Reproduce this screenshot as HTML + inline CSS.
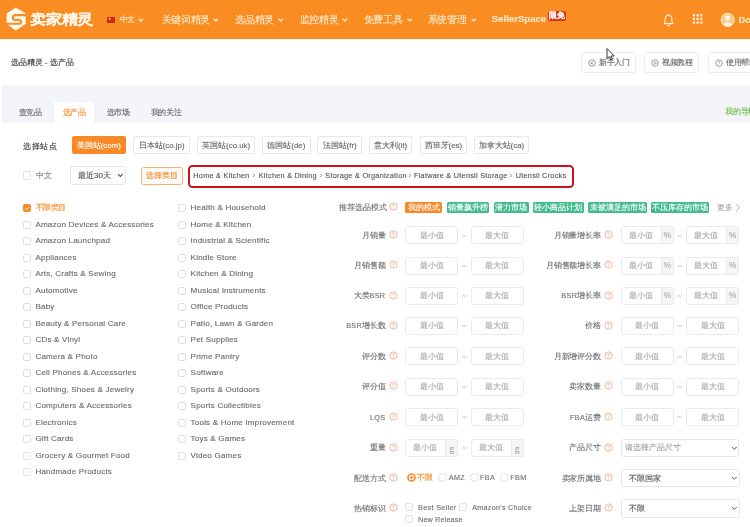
<!DOCTYPE html>
<html><head><meta charset="utf-8"><title>卖家精灵 - 选产品</title>
<style>
html,body{margin:0;padding:0;width:750px;height:527px;overflow:hidden;background:#fff;font-family:"Liberation Sans",sans-serif;}
#root{position:relative;width:750px;height:527px;overflow:hidden;will-change:transform;-webkit-text-stroke-width:0.12px;}
</style></head><body><div id="root">
<div style="position:absolute;left:0px;top:0px;width:750px;height:38px;box-sizing:border-box;background:#FA8D22"></div>
<div style="position:absolute;left:0px;top:38px;width:750px;height:1px;box-sizing:border-box;background:#E3923F"></div>
<div style="position:absolute;left:0px;top:39px;width:750px;height:1px;box-sizing:border-box;background:#FFF1D6"></div>
<div style="position:absolute;left:0px;top:40px;width:750px;height:1px;box-sizing:border-box;background:#FFFAF0"></div>
<svg style="position:absolute;left:0;top:0" width="100" height="38" viewBox="0 0 100 38">
<polygon points="15.9,7.6 25.7,13.6 25.7,24.1 15.9,30.4 6.6,24.1 6.6,13.6" fill="#FFF8EC"/>
<path d="M26,15.1 H15.3 A2.45,2.45 0 0 0 15.3,20 H19.3 A1.85,1.85 0 0 1 19.3,23.7 H6" fill="none" stroke="#FA8D22" stroke-width="2.1"/>
</svg>
<div style="position:absolute;left:29.8px;top:10.20px;line-height:20.80px;font-size:16px;color:#FFF8EC;white-space:nowrap;font-weight:700;letter-spacing:-0.1px;-webkit-text-stroke:0.12px #FFF8EC;transform:scaleY(0.86);transform-origin:50% 50%">卖家精灵</div>
<div style="position:absolute;left:107.2px;top:16.8px;width:8.0px;height:6.0px;box-sizing:border-box;background:#D12A1C"></div>
<svg style="position:absolute;left:107.5px;top:17px" width="4" height="4" viewBox="0 0 4 4"><polygon points="1.6,0.4 2.1,1.4 3.1,1.5 2.3,2.2 2.6,3.2 1.6,2.6 0.7,3.2 1,2.2 0.2,1.5 1.2,1.4" fill="#F7D23A"/></svg>
<div style="position:absolute;left:119.6px;top:15.00px;line-height:10.40px;font-size:8px;color:#FFEACD;white-space:nowrap;letter-spacing:-0.8px">中文</div>
<svg style="position:absolute;left:137.6px;top:18.2px" width="5.6" height="4" viewBox="0 0 5.6 4"><path d="M0.6,0.7 L2.8,3 L5.0,0.7" fill="none" stroke="#FFEACD" stroke-width="1.35"/></svg>
<div style="position:absolute;left:161.7px;top:13.10px;line-height:13.00px;font-size:10px;color:#FFEACD;white-space:nowrap;letter-spacing:-0.3px">关键词精灵</div>
<svg style="position:absolute;left:213px;top:18px" width="5.6" height="4" viewBox="0 0 5.6 4"><path d="M0.6,0.7 L2.8,3 L5.0,0.7" fill="none" stroke="#FFEACD" stroke-width="1.35"/></svg>
<div style="position:absolute;left:235.2px;top:13.10px;line-height:13.00px;font-size:10px;color:#FFEACD;white-space:nowrap;letter-spacing:-0.3px">选品精灵</div>
<svg style="position:absolute;left:277.5px;top:18px" width="5.6" height="4" viewBox="0 0 5.6 4"><path d="M0.6,0.7 L2.8,3 L5.0,0.7" fill="none" stroke="#FFEACD" stroke-width="1.35"/></svg>
<div style="position:absolute;left:299.7px;top:13.10px;line-height:13.00px;font-size:10px;color:#FFEACD;white-space:nowrap;letter-spacing:-0.3px">监控精灵</div>
<svg style="position:absolute;left:342px;top:18px" width="5.6" height="4" viewBox="0 0 5.6 4"><path d="M0.6,0.7 L2.8,3 L5.0,0.7" fill="none" stroke="#FFEACD" stroke-width="1.35"/></svg>
<div style="position:absolute;left:363.7px;top:13.10px;line-height:13.00px;font-size:10px;color:#FFEACD;white-space:nowrap;letter-spacing:-0.3px">免费工具</div>
<svg style="position:absolute;left:406.5px;top:18px" width="5.6" height="4" viewBox="0 0 5.6 4"><path d="M0.6,0.7 L2.8,3 L5.0,0.7" fill="none" stroke="#FFEACD" stroke-width="1.35"/></svg>
<div style="position:absolute;left:427.7px;top:13.10px;line-height:13.00px;font-size:10px;color:#FFEACD;white-space:nowrap;letter-spacing:-0.3px">系统管理</div>
<svg style="position:absolute;left:471px;top:18px" width="5.6" height="4" viewBox="0 0 5.6 4"><path d="M0.6,0.7 L2.8,3 L5.0,0.7" fill="none" stroke="#FFEACD" stroke-width="1.35"/></svg>
<div style="position:absolute;left:491.8px;top:13.06px;line-height:12.48px;font-size:9.6px;color:#FFE6C6;white-space:nowrap;font-weight:700">SellerSpace</div>
<div style="position:absolute;left:548.3px;top:11.4px;width:17.90000000000009px;height:9.999999999999998px;box-sizing:border-box;background:#D5351D;border-radius:2.5px"></div>
<div style="position:absolute;left:548.3px;width:17.90000000000009px;text-align:center;top:11.33px;line-height:10.14px;font-size:7.8px;color:#FFF4F0;white-space:nowrap;font-weight:700">限免</div>
<svg style="position:absolute;left:662px;top:13px" width="13" height="14" viewBox="0 0 13 14">
<path d="M2.2,10.6 C3.2,9.4 3.2,8.3 3.2,6.2 C3.2,3.7 4.6,2.2 6.5,2.2 C8.4,2.2 9.8,3.7 9.8,6.2 C9.8,8.3 9.8,9.4 10.8,10.6 Z" fill="none" stroke="#FFF3E3" stroke-width="1.1" stroke-linejoin="round"/>
<path d="M5.3,12.2 Q6.5,13.3 7.7,12.2" fill="none" stroke="#FFF3E3" stroke-width="1.1"/>
<circle cx="6.5" cy="1.6" r="0.7" fill="#FFF3E3"/>
</svg>
<svg style="position:absolute;left:692px;top:14px" width="12" height="11" viewBox="0 0 12 11"><rect x="0.8" y="0.2" width="2.2" height="2.2" fill="#FFF3E3"/><rect x="0.8" y="3.8000000000000003" width="2.2" height="2.2" fill="#FFF3E3"/><rect x="0.8" y="7.4" width="2.2" height="2.2" fill="#FFF3E3"/><rect x="4.5" y="0.2" width="2.2" height="2.2" fill="#FFF3E3"/><rect x="4.5" y="3.8000000000000003" width="2.2" height="2.2" fill="#FFF3E3"/><rect x="4.5" y="7.4" width="2.2" height="2.2" fill="#FFF3E3"/><rect x="8.200000000000001" y="0.2" width="2.2" height="2.2" fill="#FFF3E3"/><rect x="8.200000000000001" y="3.8000000000000003" width="2.2" height="2.2" fill="#FFF3E3"/><rect x="8.200000000000001" y="7.4" width="2.2" height="2.2" fill="#FFF3E3"/></svg>
<svg style="position:absolute;left:719px;top:11px" width="18" height="18" viewBox="0 0 18 18">
<defs><clipPath id="av"><circle cx="8.7" cy="8.8" r="6.6"/></clipPath></defs>
<circle cx="8.7" cy="8.8" r="6.6" fill="#FBCB90" stroke="#FFE7C8" stroke-width="1"/>
<g clip-path="url(#av)"><circle cx="8.6" cy="7.1" r="2.6" fill="#FFF4E4"/>
<ellipse cx="8.6" cy="14.6" rx="5" ry="3.2" fill="#FFF4E4"/></g>
</svg>
<div style="position:absolute;left:738.6px;top:14.29px;line-height:12.22px;font-size:9.4px;color:#FFE8C6;white-space:nowrap;font-weight:700">Do</div>
<div style="position:absolute;left:10.8px;top:58.10px;line-height:10.40px;font-size:8px;color:#333;white-space:nowrap;">选品精灵 - 选产品</div>
<div style="position:absolute;left:581.3px;top:52px;width:55.10000000000002px;height:20.5px;box-sizing:border-box;border:1px solid #ECECEC;border-radius:2.5px;background:#fff"></div>
<div style="position:absolute;left:598.8px;top:57.60px;line-height:10.40px;font-size:8px;color:#666;white-space:nowrap;letter-spacing:-0.2px">新手入门</div>
<svg style="position:absolute;left:588.3px;top:58.5px" width="8" height="8" viewBox="0 0 8 8"><circle cx="4" cy="4" r="3.3" fill="none" stroke="#888" stroke-width="0.8"/><path d="M5.3,2.6 L2.6,4 L5.3,5.4" fill="none" stroke="#888" stroke-width="0.8"/></svg>
<div style="position:absolute;left:644.3px;top:52px;width:55.200000000000045px;height:20.5px;box-sizing:border-box;border:1px solid #ECECEC;border-radius:2.5px;background:#fff"></div>
<div style="position:absolute;left:661.8px;top:57.60px;line-height:10.40px;font-size:8px;color:#666;white-space:nowrap;letter-spacing:-0.2px">视频教程</div>
<svg style="position:absolute;left:651.3px;top:58.5px" width="8" height="8" viewBox="0 0 8 8"><circle cx="4" cy="4" r="3.3" fill="none" stroke="#888" stroke-width="0.8"/><path d="M3.2,2.4 L5.6,4 L3.2,5.6Z" fill="none" stroke="#888" stroke-width="0.7"/></svg>
<div style="position:absolute;left:708.4px;top:52px;width:71.60000000000002px;height:20.5px;box-sizing:border-box;border:1px solid #ECECEC;border-radius:2.5px;background:#fff"></div>
<div style="position:absolute;left:725.9px;top:57.60px;line-height:10.40px;font-size:8px;color:#666;white-space:nowrap;letter-spacing:-0.2px">使用帮助</div>
<svg style="position:absolute;left:715.4px;top:58.5px" width="8" height="8" viewBox="0 0 8 8"><circle cx="4" cy="4" r="3.3" fill="none" stroke="#888" stroke-width="0.8"/><text x="4" y="5.8" font-size="5" text-anchor="middle" fill="#888" font-family="Liberation Sans">?</text></svg>
<div style="position:absolute;left:2px;top:85px;width:748px;height:37.5px;box-sizing:border-box;background:#F4F5F8"></div>
<div style="position:absolute;left:53.7px;top:102px;width:40.8px;height:20.5px;box-sizing:border-box;background:#fff"></div>
<div style="position:absolute;left:18.5px;top:107.50px;line-height:10.40px;font-size:8px;color:#666;white-space:nowrap;letter-spacing:-0.25px">查竞品</div>
<div style="position:absolute;left:62.5px;top:107.50px;line-height:10.40px;font-size:8px;color:#F78A26;white-space:nowrap;letter-spacing:-0.25px">选产品</div>
<div style="position:absolute;left:106.5px;top:107.50px;line-height:10.40px;font-size:8px;color:#666;white-space:nowrap;letter-spacing:-0.25px">选市场</div>
<div style="position:absolute;left:150.5px;top:107.50px;line-height:10.40px;font-size:8px;color:#666;white-space:nowrap;letter-spacing:-0.25px">我的关注</div>
<div style="position:absolute;left:725px;top:106.80px;line-height:10.40px;font-size:8px;color:#67BD45;white-space:nowrap;letter-spacing:-0.2px">我的导航</div>
<div style="position:absolute;left:23.3px;top:141.70px;line-height:10.40px;font-size:8px;color:#3A3A3A;white-space:nowrap;letter-spacing:0.45px">选择站点</div>
<div style="position:absolute;left:71.5px;top:136px;width:54.5px;height:18px;box-sizing:border-box;background:#F78A26;border-radius:2px"></div>
<div style="position:absolute;left:71.5px;width:54.5px;text-align:center;top:140.56px;line-height:10.27px;font-size:7.9px;color:#fff;white-space:nowrap;">美国站(com)</div>
<div style="position:absolute;left:133.3px;top:136px;width:56.69999999999999px;height:18px;box-sizing:border-box;border:1px solid #E8E8E8;border-radius:2px"></div>
<div style="position:absolute;left:133.3px;width:56.69999999999999px;text-align:center;top:140.56px;line-height:10.27px;font-size:7.9px;color:#666;white-space:nowrap;">日本站(co.jp)</div>
<div style="position:absolute;left:196.8px;top:136px;width:58.69999999999999px;height:18px;box-sizing:border-box;border:1px solid #E8E8E8;border-radius:2px"></div>
<div style="position:absolute;left:196.8px;width:58.69999999999999px;text-align:center;top:140.56px;line-height:10.27px;font-size:7.9px;color:#666;white-space:nowrap;">英国站(co.uk)</div>
<div style="position:absolute;left:262px;top:136px;width:48.69999999999999px;height:18px;box-sizing:border-box;border:1px solid #E8E8E8;border-radius:2px"></div>
<div style="position:absolute;left:262px;width:48.69999999999999px;text-align:center;top:140.56px;line-height:10.27px;font-size:7.9px;color:#666;white-space:nowrap;">德国站(de)</div>
<div style="position:absolute;left:317.3px;top:136px;width:44.69999999999999px;height:18px;box-sizing:border-box;border:1px solid #E8E8E8;border-radius:2px"></div>
<div style="position:absolute;left:317.3px;width:44.69999999999999px;text-align:center;top:140.56px;line-height:10.27px;font-size:7.9px;color:#666;white-space:nowrap;">法国站(fr)</div>
<div style="position:absolute;left:368.8px;top:136px;width:43.69999999999999px;height:18px;box-sizing:border-box;border:1px solid #E8E8E8;border-radius:2px"></div>
<div style="position:absolute;left:368.8px;width:43.69999999999999px;text-align:center;top:140.56px;line-height:10.27px;font-size:7.9px;color:#666;white-space:nowrap;">意大利(it)</div>
<div style="position:absolute;left:420px;top:136px;width:46.69999999999999px;height:18px;box-sizing:border-box;border:1px solid #E8E8E8;border-radius:2px"></div>
<div style="position:absolute;left:420px;width:46.69999999999999px;text-align:center;top:140.56px;line-height:10.27px;font-size:7.9px;color:#666;white-space:nowrap;">西班牙(es)</div>
<div style="position:absolute;left:474px;top:136px;width:54.799999999999955px;height:18px;box-sizing:border-box;border:1px solid #E8E8E8;border-radius:2px"></div>
<div style="position:absolute;left:474px;width:54.799999999999955px;text-align:center;top:140.56px;line-height:10.27px;font-size:7.9px;color:#666;white-space:nowrap;">加拿大站(ca)</div>
<div style="position:absolute;left:23.1px;top:171.4px;width:8.2px;height:8.199999999999989px;box-sizing:border-box;border:1px solid #DFDFE3;border-radius:2px;background:#fff"></div>
<div style="position:absolute;left:35.5px;top:171.00px;line-height:10.40px;font-size:8px;color:#8A8A8A;white-space:nowrap;">中文</div>
<div style="position:absolute;left:70px;top:166px;width:55.5px;height:18.5px;box-sizing:border-box;border:1px solid #E6E6E6;border-radius:2.5px"></div>
<div style="position:absolute;left:78px;top:170.80px;line-height:10.40px;font-size:8px;color:#555;white-space:nowrap;">最近30天</div>
<svg style="position:absolute;left:117px;top:173px" width="7" height="5" viewBox="0 0 7 5"><path d="M0.9,1 L3.3,3.4 L5.7,1" fill="none" stroke="#444" stroke-width="1.05"/></svg>
<div style="position:absolute;left:140.5px;top:167px;width:42.0px;height:18px;box-sizing:border-box;border:1px solid #F2B27A;border-radius:2.5px;background:#FFFAF5"></div>
<div style="position:absolute;left:140.5px;width:42.0px;text-align:center;top:171.37px;line-height:10.66px;font-size:8.2px;color:#F08A2E;white-space:nowrap;">选择类目</div>
<div style="position:absolute;left:188px;top:165px;width:385.5px;height:23px;box-sizing:border-box;border:2px solid #C8141C;border-radius:4.5px"></div>
<div style="position:absolute;left:193.3px;top:171.36px;line-height:9.49px;font-size:7.3px;color:#555;white-space:nowrap;letter-spacing:0.26px">Home &amp; Kitchen</div>
<div style="position:absolute;left:258.7px;top:171.36px;line-height:9.49px;font-size:7.3px;color:#555;white-space:nowrap;letter-spacing:0.26px">Kitchen &amp; Dining</div>
<div style="position:absolute;left:325.3px;top:171.36px;line-height:9.49px;font-size:7.3px;color:#555;white-space:nowrap;letter-spacing:0.26px">Storage &amp; Organization</div>
<div style="position:absolute;left:414px;top:171.36px;line-height:9.49px;font-size:7.3px;color:#555;white-space:nowrap;letter-spacing:0.26px">Flatware &amp; Utensil Storage</div>
<div style="position:absolute;left:515.7px;top:171.36px;line-height:9.49px;font-size:7.3px;color:#555;white-space:nowrap;letter-spacing:0.26px">Utensil Crocks</div>
<svg style="position:absolute;left:251.8px;top:173.3px" width="4" height="5" viewBox="0 0 4 5"><path d="M1.1,0.9 L2.7,2.5 L1.1,4.1" fill="none" stroke="#777" stroke-width="0.8"/></svg>
<svg style="position:absolute;left:318.5px;top:173.3px" width="4" height="5" viewBox="0 0 4 5"><path d="M1.1,0.9 L2.7,2.5 L1.1,4.1" fill="none" stroke="#777" stroke-width="0.8"/></svg>
<svg style="position:absolute;left:407.5px;top:173.3px" width="4" height="5" viewBox="0 0 4 5"><path d="M1.1,0.9 L2.7,2.5 L1.1,4.1" fill="none" stroke="#777" stroke-width="0.8"/></svg>
<svg style="position:absolute;left:509.3px;top:173.3px" width="4" height="5" viewBox="0 0 4 5"><path d="M1.1,0.9 L2.7,2.5 L1.1,4.1" fill="none" stroke="#777" stroke-width="0.8"/></svg>
<div style="position:absolute;left:23px;top:204.3px;width:8.2px;height:8.199999999999989px;box-sizing:border-box;background:#F78A26;border-radius:2px"></div>
<svg style="position:absolute;left:23px;top:204.3px" width="9" height="9" viewBox="0 0 9 9"><path d="M2.4,4.3 L3.7,5.6 L5.9,3.1" fill="none" stroke="#fff" stroke-width="1"/></svg>
<div style="position:absolute;left:35.6px;top:203.20px;line-height:10.40px;font-size:8px;color:#F78A26;white-space:nowrap;letter-spacing:-0.5px">不限类目</div>
<div style="position:absolute;left:23px;top:220.8px;width:8.2px;height:8.199999999999989px;box-sizing:border-box;border:1px solid #DFDFE3;border-radius:2px;background:#fff"></div>
<div style="position:absolute;left:35.4px;top:219.64px;line-height:10.53px;font-size:8.1px;color:#6A6A6A;white-space:nowrap;letter-spacing:0.17px">Amazon Devices &amp; Accessories</div>
<div style="position:absolute;left:23px;top:237.3px;width:8.2px;height:8.199999999999989px;box-sizing:border-box;border:1px solid #DFDFE3;border-radius:2px;background:#fff"></div>
<div style="position:absolute;left:35.4px;top:236.14px;line-height:10.53px;font-size:8.1px;color:#6A6A6A;white-space:nowrap;letter-spacing:0.17px">Amazon Launchpad</div>
<div style="position:absolute;left:23px;top:253.8px;width:8.2px;height:8.199999999999989px;box-sizing:border-box;border:1px solid #DFDFE3;border-radius:2px;background:#fff"></div>
<div style="position:absolute;left:35.4px;top:252.63px;line-height:10.53px;font-size:8.1px;color:#6A6A6A;white-space:nowrap;letter-spacing:0.17px">Appliances</div>
<div style="position:absolute;left:23px;top:270.3px;width:8.2px;height:8.199999999999989px;box-sizing:border-box;border:1px solid #DFDFE3;border-radius:2px;background:#fff"></div>
<div style="position:absolute;left:35.4px;top:269.13px;line-height:10.53px;font-size:8.1px;color:#6A6A6A;white-space:nowrap;letter-spacing:0.17px">Arts, Crafts &amp; Sewing</div>
<div style="position:absolute;left:23px;top:286.8px;width:8.2px;height:8.199999999999989px;box-sizing:border-box;border:1px solid #DFDFE3;border-radius:2px;background:#fff"></div>
<div style="position:absolute;left:35.4px;top:285.63px;line-height:10.53px;font-size:8.1px;color:#6A6A6A;white-space:nowrap;letter-spacing:0.17px">Automotive</div>
<div style="position:absolute;left:23px;top:303.3px;width:8.2px;height:8.199999999999989px;box-sizing:border-box;border:1px solid #DFDFE3;border-radius:2px;background:#fff"></div>
<div style="position:absolute;left:35.4px;top:302.13px;line-height:10.53px;font-size:8.1px;color:#6A6A6A;white-space:nowrap;letter-spacing:0.17px">Baby</div>
<div style="position:absolute;left:23px;top:319.8px;width:8.2px;height:8.199999999999989px;box-sizing:border-box;border:1px solid #DFDFE3;border-radius:2px;background:#fff"></div>
<div style="position:absolute;left:35.4px;top:318.63px;line-height:10.53px;font-size:8.1px;color:#6A6A6A;white-space:nowrap;letter-spacing:0.17px">Beauty &amp; Personal Care</div>
<div style="position:absolute;left:23px;top:336.3px;width:8.2px;height:8.199999999999989px;box-sizing:border-box;border:1px solid #DFDFE3;border-radius:2px;background:#fff"></div>
<div style="position:absolute;left:35.4px;top:335.13px;line-height:10.53px;font-size:8.1px;color:#6A6A6A;white-space:nowrap;letter-spacing:0.17px">CDs &amp; Vinyl</div>
<div style="position:absolute;left:23px;top:352.8px;width:8.2px;height:8.199999999999989px;box-sizing:border-box;border:1px solid #DFDFE3;border-radius:2px;background:#fff"></div>
<div style="position:absolute;left:35.4px;top:351.63px;line-height:10.53px;font-size:8.1px;color:#6A6A6A;white-space:nowrap;letter-spacing:0.17px">Camera &amp; Photo</div>
<div style="position:absolute;left:23px;top:369.3px;width:8.2px;height:8.199999999999989px;box-sizing:border-box;border:1px solid #DFDFE3;border-radius:2px;background:#fff"></div>
<div style="position:absolute;left:35.4px;top:368.13px;line-height:10.53px;font-size:8.1px;color:#6A6A6A;white-space:nowrap;letter-spacing:0.17px">Cell Phones &amp; Accessories</div>
<div style="position:absolute;left:23px;top:385.8px;width:8.2px;height:8.199999999999989px;box-sizing:border-box;border:1px solid #DFDFE3;border-radius:2px;background:#fff"></div>
<div style="position:absolute;left:35.4px;top:384.63px;line-height:10.53px;font-size:8.1px;color:#6A6A6A;white-space:nowrap;letter-spacing:0.17px">Clothing, Shoes &amp; Jewelry</div>
<div style="position:absolute;left:23px;top:402.3px;width:8.2px;height:8.199999999999989px;box-sizing:border-box;border:1px solid #DFDFE3;border-radius:2px;background:#fff"></div>
<div style="position:absolute;left:35.4px;top:401.13px;line-height:10.53px;font-size:8.1px;color:#6A6A6A;white-space:nowrap;letter-spacing:0.17px">Computers &amp; Accessories</div>
<div style="position:absolute;left:23px;top:418.8px;width:8.2px;height:8.199999999999989px;box-sizing:border-box;border:1px solid #DFDFE3;border-radius:2px;background:#fff"></div>
<div style="position:absolute;left:35.4px;top:417.63px;line-height:10.53px;font-size:8.1px;color:#6A6A6A;white-space:nowrap;letter-spacing:0.17px">Electronics</div>
<div style="position:absolute;left:23px;top:435.3px;width:8.2px;height:8.199999999999989px;box-sizing:border-box;border:1px solid #DFDFE3;border-radius:2px;background:#fff"></div>
<div style="position:absolute;left:35.4px;top:434.13px;line-height:10.53px;font-size:8.1px;color:#6A6A6A;white-space:nowrap;letter-spacing:0.17px">Gift Cards</div>
<div style="position:absolute;left:23px;top:451.8px;width:8.2px;height:8.199999999999989px;box-sizing:border-box;border:1px solid #DFDFE3;border-radius:2px;background:#fff"></div>
<div style="position:absolute;left:35.4px;top:450.63px;line-height:10.53px;font-size:8.1px;color:#6A6A6A;white-space:nowrap;letter-spacing:0.17px">Grocery &amp; Gourmet Food</div>
<div style="position:absolute;left:23px;top:468.3px;width:8.2px;height:8.199999999999989px;box-sizing:border-box;border:1px solid #DFDFE3;border-radius:2px;background:#fff"></div>
<div style="position:absolute;left:35.4px;top:467.13px;line-height:10.53px;font-size:8.1px;color:#6A6A6A;white-space:nowrap;letter-spacing:0.17px">Handmade Products</div>
<div style="position:absolute;left:178px;top:204.3px;width:8.199999999999989px;height:8.199999999999989px;box-sizing:border-box;border:1px solid #DFDFE3;border-radius:2px;background:#fff"></div>
<div style="position:absolute;left:190.6px;top:203.14px;line-height:10.53px;font-size:8.1px;color:#6A6A6A;white-space:nowrap;letter-spacing:0.17px">Health &amp; Household</div>
<div style="position:absolute;left:178px;top:220.8px;width:8.199999999999989px;height:8.199999999999989px;box-sizing:border-box;border:1px solid #DFDFE3;border-radius:2px;background:#fff"></div>
<div style="position:absolute;left:190.6px;top:219.64px;line-height:10.53px;font-size:8.1px;color:#6A6A6A;white-space:nowrap;letter-spacing:0.17px">Home &amp; Kitchen</div>
<div style="position:absolute;left:178px;top:237.3px;width:8.199999999999989px;height:8.199999999999989px;box-sizing:border-box;border:1px solid #DFDFE3;border-radius:2px;background:#fff"></div>
<div style="position:absolute;left:190.6px;top:236.14px;line-height:10.53px;font-size:8.1px;color:#6A6A6A;white-space:nowrap;letter-spacing:0.17px">Industrial &amp; Scientific</div>
<div style="position:absolute;left:178px;top:253.8px;width:8.199999999999989px;height:8.199999999999989px;box-sizing:border-box;border:1px solid #DFDFE3;border-radius:2px;background:#fff"></div>
<div style="position:absolute;left:190.6px;top:252.63px;line-height:10.53px;font-size:8.1px;color:#6A6A6A;white-space:nowrap;letter-spacing:0.17px">Kindle Store</div>
<div style="position:absolute;left:178px;top:270.3px;width:8.199999999999989px;height:8.199999999999989px;box-sizing:border-box;border:1px solid #DFDFE3;border-radius:2px;background:#fff"></div>
<div style="position:absolute;left:190.6px;top:269.13px;line-height:10.53px;font-size:8.1px;color:#6A6A6A;white-space:nowrap;letter-spacing:0.17px">Kitchen &amp; Dining</div>
<div style="position:absolute;left:178px;top:286.8px;width:8.199999999999989px;height:8.199999999999989px;box-sizing:border-box;border:1px solid #DFDFE3;border-radius:2px;background:#fff"></div>
<div style="position:absolute;left:190.6px;top:285.63px;line-height:10.53px;font-size:8.1px;color:#6A6A6A;white-space:nowrap;letter-spacing:0.17px">Musical Instruments</div>
<div style="position:absolute;left:178px;top:303.3px;width:8.199999999999989px;height:8.199999999999989px;box-sizing:border-box;border:1px solid #DFDFE3;border-radius:2px;background:#fff"></div>
<div style="position:absolute;left:190.6px;top:302.13px;line-height:10.53px;font-size:8.1px;color:#6A6A6A;white-space:nowrap;letter-spacing:0.17px">Office Products</div>
<div style="position:absolute;left:178px;top:319.8px;width:8.199999999999989px;height:8.199999999999989px;box-sizing:border-box;border:1px solid #DFDFE3;border-radius:2px;background:#fff"></div>
<div style="position:absolute;left:190.6px;top:318.63px;line-height:10.53px;font-size:8.1px;color:#6A6A6A;white-space:nowrap;letter-spacing:0.17px">Patio, Lawn &amp; Garden</div>
<div style="position:absolute;left:178px;top:336.3px;width:8.199999999999989px;height:8.199999999999989px;box-sizing:border-box;border:1px solid #DFDFE3;border-radius:2px;background:#fff"></div>
<div style="position:absolute;left:190.6px;top:335.13px;line-height:10.53px;font-size:8.1px;color:#6A6A6A;white-space:nowrap;letter-spacing:0.17px">Pet Supplies</div>
<div style="position:absolute;left:178px;top:352.8px;width:8.199999999999989px;height:8.199999999999989px;box-sizing:border-box;border:1px solid #DFDFE3;border-radius:2px;background:#fff"></div>
<div style="position:absolute;left:190.6px;top:351.63px;line-height:10.53px;font-size:8.1px;color:#6A6A6A;white-space:nowrap;letter-spacing:0.17px">Prime Pantry</div>
<div style="position:absolute;left:178px;top:369.3px;width:8.199999999999989px;height:8.199999999999989px;box-sizing:border-box;border:1px solid #DFDFE3;border-radius:2px;background:#fff"></div>
<div style="position:absolute;left:190.6px;top:368.13px;line-height:10.53px;font-size:8.1px;color:#6A6A6A;white-space:nowrap;letter-spacing:0.17px">Software</div>
<div style="position:absolute;left:178px;top:385.8px;width:8.199999999999989px;height:8.199999999999989px;box-sizing:border-box;border:1px solid #DFDFE3;border-radius:2px;background:#fff"></div>
<div style="position:absolute;left:190.6px;top:384.63px;line-height:10.53px;font-size:8.1px;color:#6A6A6A;white-space:nowrap;letter-spacing:0.17px">Sports &amp; Outdoors</div>
<div style="position:absolute;left:178px;top:402.3px;width:8.199999999999989px;height:8.199999999999989px;box-sizing:border-box;border:1px solid #DFDFE3;border-radius:2px;background:#fff"></div>
<div style="position:absolute;left:190.6px;top:401.13px;line-height:10.53px;font-size:8.1px;color:#6A6A6A;white-space:nowrap;letter-spacing:0.17px">Sports Collectibles</div>
<div style="position:absolute;left:178px;top:418.8px;width:8.199999999999989px;height:8.199999999999989px;box-sizing:border-box;border:1px solid #DFDFE3;border-radius:2px;background:#fff"></div>
<div style="position:absolute;left:190.6px;top:417.63px;line-height:10.53px;font-size:8.1px;color:#6A6A6A;white-space:nowrap;letter-spacing:0.17px">Tools &amp; Home Improvement</div>
<div style="position:absolute;left:178px;top:435.3px;width:8.199999999999989px;height:8.199999999999989px;box-sizing:border-box;border:1px solid #DFDFE3;border-radius:2px;background:#fff"></div>
<div style="position:absolute;left:190.6px;top:434.13px;line-height:10.53px;font-size:8.1px;color:#6A6A6A;white-space:nowrap;letter-spacing:0.17px">Toys &amp; Games</div>
<div style="position:absolute;left:178px;top:451.8px;width:8.199999999999989px;height:8.199999999999989px;box-sizing:border-box;border:1px solid #DFDFE3;border-radius:2px;background:#fff"></div>
<div style="position:absolute;left:190.6px;top:450.63px;line-height:10.53px;font-size:8.1px;color:#6A6A6A;white-space:nowrap;letter-spacing:0.17px">Video Games</div>
<div style="position:absolute;left:339.3px;top:202.90px;line-height:10.40px;font-size:8px;color:#6F6F6F;white-space:nowrap;letter-spacing:-0.1px">推荐选品模式</div>
<svg style="position:absolute;left:389px;top:202.4px" width="9" height="9" viewBox="0 0 9 9"><circle cx="4.5" cy="4.5" r="3.6" fill="none" stroke="#F1A888" stroke-width="0.85"/><path d="M3.4,3.6 Q3.4,2.5 4.5,2.5 Q5.6,2.5 5.6,3.5 Q5.6,4.2 4.5,4.6 V5.3" fill="none" stroke="#F1A888" stroke-width="0.7"/><circle cx="4.5" cy="6.5" r="0.42" fill="#F1A888"/></svg>
<div style="position:absolute;left:405.2px;top:201.8px;width:37.0px;height:11.399999999999977px;box-sizing:border-box;background:#F78A26;border-radius:1.5px"></div>
<div style="position:absolute;left:405.2px;width:37.0px;text-align:center;top:202.94px;line-height:10.53px;font-size:8.1px;color:#fff;white-space:nowrap;">我的模式</div>
<div style="position:absolute;left:446.6px;top:201.8px;width:42.89999999999998px;height:11.399999999999977px;box-sizing:border-box;background:#42BC8B;border-radius:1.5px"></div>
<div style="position:absolute;left:446.6px;width:42.89999999999998px;text-align:center;top:202.94px;line-height:10.53px;font-size:8.1px;color:#fff;white-space:nowrap;">销量飙升榜</div>
<div style="position:absolute;left:493.5px;top:201.8px;width:35.700000000000045px;height:11.399999999999977px;box-sizing:border-box;background:#42BC8B;border-radius:1.5px"></div>
<div style="position:absolute;left:493.5px;width:35.700000000000045px;text-align:center;top:202.94px;line-height:10.53px;font-size:8.1px;color:#fff;white-space:nowrap;">潜力市场</div>
<div style="position:absolute;left:533.2px;top:201.8px;width:50.59999999999991px;height:11.399999999999977px;box-sizing:border-box;background:#42BC8B;border-radius:1.5px"></div>
<div style="position:absolute;left:533.2px;width:50.59999999999991px;text-align:center;top:202.94px;line-height:10.53px;font-size:8.1px;color:#fff;white-space:nowrap;">轻小商品计划</div>
<div style="position:absolute;left:588.1px;top:201.8px;width:59.19999999999993px;height:11.399999999999977px;box-sizing:border-box;background:#42BC8B;border-radius:1.5px"></div>
<div style="position:absolute;left:588.1px;width:59.19999999999993px;text-align:center;top:202.94px;line-height:10.53px;font-size:8.1px;color:#fff;white-space:nowrap;">未被满足的市场</div>
<div style="position:absolute;left:651px;top:201.8px;width:57.700000000000045px;height:11.399999999999977px;box-sizing:border-box;background:#42BC8B;border-radius:1.5px"></div>
<div style="position:absolute;left:651px;width:57.700000000000045px;text-align:center;top:202.94px;line-height:10.53px;font-size:8.1px;color:#fff;white-space:nowrap;">不压库存的市场</div>
<div style="position:absolute;left:717px;top:202.90px;line-height:10.40px;font-size:8px;color:#A8A8A8;white-space:nowrap;">更多</div>
<svg style="position:absolute;left:735px;top:203px" width="6" height="9" viewBox="0 0 6 9"><path d="M1.2,1 L4.4,4.5 L1.2,8" fill="none" stroke="#A8A8A8" stroke-width="0.9"/></svg>
<div style="position:absolute;right:364.6px;top:230.70px;line-height:10.40px;font-size:8px;color:#6F6F6F;white-space:nowrap;letter-spacing:-0.22px">月销量</div>
<svg style="position:absolute;left:389px;top:230.1px" width="9" height="9" viewBox="0 0 9 9"><circle cx="4.5" cy="4.5" r="3.6" fill="none" stroke="#F1A888" stroke-width="0.85"/><path d="M3.4,3.6 Q3.4,2.5 4.5,2.5 Q5.6,2.5 5.6,3.5 Q5.6,4.2 4.5,4.6 V5.3" fill="none" stroke="#F1A888" stroke-width="0.7"/><circle cx="4.5" cy="6.5" r="0.42" fill="#F1A888"/></svg>
<div style="position:absolute;right:149.39999999999998px;top:230.70px;line-height:10.40px;font-size:8px;color:#6F6F6F;white-space:nowrap;letter-spacing:-0.22px">月销量增长率</div>
<svg style="position:absolute;left:603.8px;top:230.1px" width="9" height="9" viewBox="0 0 9 9"><circle cx="4.5" cy="4.5" r="3.6" fill="none" stroke="#F1A888" stroke-width="0.85"/><path d="M3.4,3.6 Q3.4,2.5 4.5,2.5 Q5.6,2.5 5.6,3.5 Q5.6,4.2 4.5,4.6 V5.3" fill="none" stroke="#F1A888" stroke-width="0.7"/><circle cx="4.5" cy="6.5" r="0.42" fill="#F1A888"/></svg>
<div style="position:absolute;left:405.2px;top:226px;width:53.0px;height:17.599999999999994px;box-sizing:border-box;border:1px solid #EAEAEA;border-radius:2.5px;background:#fff"></div>
<div style="position:absolute;left:405.2px;width:53.0px;text-align:center;top:230.70px;line-height:10.40px;font-size:8px;color:#ABABAB;white-space:nowrap;">最小值</div>
<div style="position:absolute;left:470.7px;top:226px;width:53.00000000000006px;height:17.599999999999994px;box-sizing:border-box;border:1px solid #EAEAEA;border-radius:2.5px;background:#fff"></div>
<div style="position:absolute;left:470.7px;width:53.00000000000006px;text-align:center;top:230.70px;line-height:10.40px;font-size:8px;color:#ABABAB;white-space:nowrap;">最大值</div>
<svg style="position:absolute;left:461.95px;top:233.5px" width="5" height="4" viewBox="0 0 5 4"><path d="M0.4,2.5 Q1.3,1.2 2.5,2 Q3.7,2.8 4.6,1.5" fill="none" stroke="#AAA" stroke-width="0.7"/></svg>
<div style="position:absolute;left:620.6px;top:226px;width:53.0px;height:17.599999999999994px;box-sizing:border-box;border:1px solid #EAEAEA;border-radius:2.5px;background:#fff"></div>
<div style="position:absolute;left:660.9px;top:226px;width:12.700000000000045px;height:17.599999999999994px;box-sizing:border-box;border:1px solid #EAEAEA;border-radius:0 2.5px 2.5px 0;background:#F5F6F8"></div>
<div style="position:absolute;left:660.9px;width:12.700000000000045px;text-align:center;top:229.91px;line-height:11.18px;font-size:8.6px;color:#A8A8A8;white-space:nowrap;">%</div>
<div style="position:absolute;left:620.6px;width:40.299999999999955px;text-align:center;top:230.70px;line-height:10.40px;font-size:8px;color:#ABABAB;white-space:nowrap;">最小值</div>
<div style="position:absolute;left:686.0px;top:226px;width:53.0px;height:17.599999999999994px;box-sizing:border-box;border:1px solid #EAEAEA;border-radius:2.5px;background:#fff"></div>
<div style="position:absolute;left:726.3px;top:226px;width:12.700000000000045px;height:17.599999999999994px;box-sizing:border-box;border:1px solid #EAEAEA;border-radius:0 2.5px 2.5px 0;background:#F5F6F8"></div>
<div style="position:absolute;left:726.3px;width:12.700000000000045px;text-align:center;top:229.91px;line-height:11.18px;font-size:8.6px;color:#A8A8A8;white-space:nowrap;">%</div>
<div style="position:absolute;left:686.0px;width:40.299999999999955px;text-align:center;top:230.70px;line-height:10.40px;font-size:8px;color:#ABABAB;white-space:nowrap;">最大值</div>
<svg style="position:absolute;left:677.3000000000001px;top:233.5px" width="5" height="4" viewBox="0 0 5 4"><path d="M0.4,2.5 Q1.3,1.2 2.5,2 Q3.7,2.8 4.6,1.5" fill="none" stroke="#AAA" stroke-width="0.7"/></svg>
<div style="position:absolute;right:364.6px;top:260.95px;line-height:10.40px;font-size:8px;color:#6F6F6F;white-space:nowrap;letter-spacing:-0.22px">月销售额</div>
<svg style="position:absolute;left:389px;top:260.34999999999997px" width="9" height="9" viewBox="0 0 9 9"><circle cx="4.5" cy="4.5" r="3.6" fill="none" stroke="#F1A888" stroke-width="0.85"/><path d="M3.4,3.6 Q3.4,2.5 4.5,2.5 Q5.6,2.5 5.6,3.5 Q5.6,4.2 4.5,4.6 V5.3" fill="none" stroke="#F1A888" stroke-width="0.7"/><circle cx="4.5" cy="6.5" r="0.42" fill="#F1A888"/></svg>
<div style="position:absolute;right:149.39999999999998px;top:260.95px;line-height:10.40px;font-size:8px;color:#6F6F6F;white-space:nowrap;letter-spacing:-0.22px">月销售额增长率</div>
<svg style="position:absolute;left:603.8px;top:260.34999999999997px" width="9" height="9" viewBox="0 0 9 9"><circle cx="4.5" cy="4.5" r="3.6" fill="none" stroke="#F1A888" stroke-width="0.85"/><path d="M3.4,3.6 Q3.4,2.5 4.5,2.5 Q5.6,2.5 5.6,3.5 Q5.6,4.2 4.5,4.6 V5.3" fill="none" stroke="#F1A888" stroke-width="0.7"/><circle cx="4.5" cy="6.5" r="0.42" fill="#F1A888"/></svg>
<div style="position:absolute;left:405.2px;top:257px;width:53.0px;height:17.600000000000023px;box-sizing:border-box;border:1px solid #EAEAEA;border-radius:2.5px;background:#fff"></div>
<div style="position:absolute;left:405.2px;width:53.0px;text-align:center;top:260.95px;line-height:10.40px;font-size:8px;color:#ABABAB;white-space:nowrap;">最小值</div>
<div style="position:absolute;left:470.7px;top:257px;width:53.00000000000006px;height:17.600000000000023px;box-sizing:border-box;border:1px solid #EAEAEA;border-radius:2.5px;background:#fff"></div>
<div style="position:absolute;left:470.7px;width:53.00000000000006px;text-align:center;top:260.95px;line-height:10.40px;font-size:8px;color:#ABABAB;white-space:nowrap;">最大值</div>
<svg style="position:absolute;left:461.95px;top:263.75px" width="5" height="4" viewBox="0 0 5 4"><path d="M0.4,2.5 Q1.3,1.2 2.5,2 Q3.7,2.8 4.6,1.5" fill="none" stroke="#AAA" stroke-width="0.7"/></svg>
<div style="position:absolute;left:620.6px;top:257px;width:53.0px;height:17.600000000000023px;box-sizing:border-box;border:1px solid #EAEAEA;border-radius:2.5px;background:#fff"></div>
<div style="position:absolute;left:660.9px;top:257px;width:12.700000000000045px;height:17.600000000000023px;box-sizing:border-box;border:1px solid #EAEAEA;border-radius:0 2.5px 2.5px 0;background:#F5F6F8"></div>
<div style="position:absolute;left:660.9px;width:12.700000000000045px;text-align:center;top:260.16px;line-height:11.18px;font-size:8.6px;color:#A8A8A8;white-space:nowrap;">%</div>
<div style="position:absolute;left:620.6px;width:40.299999999999955px;text-align:center;top:260.95px;line-height:10.40px;font-size:8px;color:#ABABAB;white-space:nowrap;">最小值</div>
<div style="position:absolute;left:686.0px;top:257px;width:53.0px;height:17.600000000000023px;box-sizing:border-box;border:1px solid #EAEAEA;border-radius:2.5px;background:#fff"></div>
<div style="position:absolute;left:726.3px;top:257px;width:12.700000000000045px;height:17.600000000000023px;box-sizing:border-box;border:1px solid #EAEAEA;border-radius:0 2.5px 2.5px 0;background:#F5F6F8"></div>
<div style="position:absolute;left:726.3px;width:12.700000000000045px;text-align:center;top:260.16px;line-height:11.18px;font-size:8.6px;color:#A8A8A8;white-space:nowrap;">%</div>
<div style="position:absolute;left:686.0px;width:40.299999999999955px;text-align:center;top:260.95px;line-height:10.40px;font-size:8px;color:#ABABAB;white-space:nowrap;">最大值</div>
<svg style="position:absolute;left:677.3000000000001px;top:263.75px" width="5" height="4" viewBox="0 0 5 4"><path d="M0.4,2.5 Q1.3,1.2 2.5,2 Q3.7,2.8 4.6,1.5" fill="none" stroke="#AAA" stroke-width="0.7"/></svg>
<div style="position:absolute;right:364.6px;top:291.20px;line-height:10.40px;font-size:8px;color:#6F6F6F;white-space:nowrap;letter-spacing:-0.22px">大类<span style="font-size:7.3px;letter-spacing:0.3px">BSR</span></div>
<svg style="position:absolute;left:389px;top:290.59999999999997px" width="9" height="9" viewBox="0 0 9 9"><circle cx="4.5" cy="4.5" r="3.6" fill="none" stroke="#F1A888" stroke-width="0.85"/><path d="M3.4,3.6 Q3.4,2.5 4.5,2.5 Q5.6,2.5 5.6,3.5 Q5.6,4.2 4.5,4.6 V5.3" fill="none" stroke="#F1A888" stroke-width="0.7"/><circle cx="4.5" cy="6.5" r="0.42" fill="#F1A888"/></svg>
<div style="position:absolute;right:149.39999999999998px;top:291.20px;line-height:10.40px;font-size:8px;color:#6F6F6F;white-space:nowrap;letter-spacing:-0.22px"><span style="font-size:7.3px;letter-spacing:0.3px">BSR</span>增长率</div>
<svg style="position:absolute;left:603.8px;top:290.59999999999997px" width="9" height="9" viewBox="0 0 9 9"><circle cx="4.5" cy="4.5" r="3.6" fill="none" stroke="#F1A888" stroke-width="0.85"/><path d="M3.4,3.6 Q3.4,2.5 4.5,2.5 Q5.6,2.5 5.6,3.5 Q5.6,4.2 4.5,4.6 V5.3" fill="none" stroke="#F1A888" stroke-width="0.7"/><circle cx="4.5" cy="6.5" r="0.42" fill="#F1A888"/></svg>
<div style="position:absolute;left:405.2px;top:287px;width:53.0px;height:17.600000000000023px;box-sizing:border-box;border:1px solid #EAEAEA;border-radius:2.5px;background:#fff"></div>
<div style="position:absolute;left:405.2px;width:53.0px;text-align:center;top:291.20px;line-height:10.40px;font-size:8px;color:#ABABAB;white-space:nowrap;">最小值</div>
<div style="position:absolute;left:470.7px;top:287px;width:53.00000000000006px;height:17.600000000000023px;box-sizing:border-box;border:1px solid #EAEAEA;border-radius:2.5px;background:#fff"></div>
<div style="position:absolute;left:470.7px;width:53.00000000000006px;text-align:center;top:291.20px;line-height:10.40px;font-size:8px;color:#ABABAB;white-space:nowrap;">最大值</div>
<svg style="position:absolute;left:461.95px;top:294.0px" width="5" height="4" viewBox="0 0 5 4"><path d="M0.4,2.5 Q1.3,1.2 2.5,2 Q3.7,2.8 4.6,1.5" fill="none" stroke="#AAA" stroke-width="0.7"/></svg>
<div style="position:absolute;left:620.6px;top:287px;width:53.0px;height:17.600000000000023px;box-sizing:border-box;border:1px solid #EAEAEA;border-radius:2.5px;background:#fff"></div>
<div style="position:absolute;left:660.9px;top:287px;width:12.700000000000045px;height:17.600000000000023px;box-sizing:border-box;border:1px solid #EAEAEA;border-radius:0 2.5px 2.5px 0;background:#F5F6F8"></div>
<div style="position:absolute;left:660.9px;width:12.700000000000045px;text-align:center;top:290.41px;line-height:11.18px;font-size:8.6px;color:#A8A8A8;white-space:nowrap;">%</div>
<div style="position:absolute;left:620.6px;width:40.299999999999955px;text-align:center;top:291.20px;line-height:10.40px;font-size:8px;color:#ABABAB;white-space:nowrap;">最小值</div>
<div style="position:absolute;left:686.0px;top:287px;width:53.0px;height:17.600000000000023px;box-sizing:border-box;border:1px solid #EAEAEA;border-radius:2.5px;background:#fff"></div>
<div style="position:absolute;left:726.3px;top:287px;width:12.700000000000045px;height:17.600000000000023px;box-sizing:border-box;border:1px solid #EAEAEA;border-radius:0 2.5px 2.5px 0;background:#F5F6F8"></div>
<div style="position:absolute;left:726.3px;width:12.700000000000045px;text-align:center;top:290.41px;line-height:11.18px;font-size:8.6px;color:#A8A8A8;white-space:nowrap;">%</div>
<div style="position:absolute;left:686.0px;width:40.299999999999955px;text-align:center;top:291.20px;line-height:10.40px;font-size:8px;color:#ABABAB;white-space:nowrap;">最大值</div>
<svg style="position:absolute;left:677.3000000000001px;top:294.0px" width="5" height="4" viewBox="0 0 5 4"><path d="M0.4,2.5 Q1.3,1.2 2.5,2 Q3.7,2.8 4.6,1.5" fill="none" stroke="#AAA" stroke-width="0.7"/></svg>
<div style="position:absolute;right:364.6px;top:321.45px;line-height:10.40px;font-size:8px;color:#6F6F6F;white-space:nowrap;letter-spacing:-0.22px"><span style="font-size:7.3px;letter-spacing:0.3px">BSR</span>增长数</div>
<svg style="position:absolute;left:389px;top:320.84999999999997px" width="9" height="9" viewBox="0 0 9 9"><circle cx="4.5" cy="4.5" r="3.6" fill="none" stroke="#F1A888" stroke-width="0.85"/><path d="M3.4,3.6 Q3.4,2.5 4.5,2.5 Q5.6,2.5 5.6,3.5 Q5.6,4.2 4.5,4.6 V5.3" fill="none" stroke="#F1A888" stroke-width="0.7"/><circle cx="4.5" cy="6.5" r="0.42" fill="#F1A888"/></svg>
<div style="position:absolute;right:149.39999999999998px;top:321.45px;line-height:10.40px;font-size:8px;color:#6F6F6F;white-space:nowrap;letter-spacing:-0.22px">价格</div>
<svg style="position:absolute;left:603.8px;top:320.84999999999997px" width="9" height="9" viewBox="0 0 9 9"><circle cx="4.5" cy="4.5" r="3.6" fill="none" stroke="#F1A888" stroke-width="0.85"/><path d="M3.4,3.6 Q3.4,2.5 4.5,2.5 Q5.6,2.5 5.6,3.5 Q5.6,4.2 4.5,4.6 V5.3" fill="none" stroke="#F1A888" stroke-width="0.7"/><circle cx="4.5" cy="6.5" r="0.42" fill="#F1A888"/></svg>
<div style="position:absolute;left:405.2px;top:317px;width:53.0px;height:17.600000000000023px;box-sizing:border-box;border:1px solid #EAEAEA;border-radius:2.5px;background:#fff"></div>
<div style="position:absolute;left:405.2px;width:53.0px;text-align:center;top:321.45px;line-height:10.40px;font-size:8px;color:#ABABAB;white-space:nowrap;">最小值</div>
<div style="position:absolute;left:470.7px;top:317px;width:53.00000000000006px;height:17.600000000000023px;box-sizing:border-box;border:1px solid #EAEAEA;border-radius:2.5px;background:#fff"></div>
<div style="position:absolute;left:470.7px;width:53.00000000000006px;text-align:center;top:321.45px;line-height:10.40px;font-size:8px;color:#ABABAB;white-space:nowrap;">最大值</div>
<svg style="position:absolute;left:461.95px;top:324.25px" width="5" height="4" viewBox="0 0 5 4"><path d="M0.4,2.5 Q1.3,1.2 2.5,2 Q3.7,2.8 4.6,1.5" fill="none" stroke="#AAA" stroke-width="0.7"/></svg>
<div style="position:absolute;left:620.6px;top:317px;width:53.0px;height:17.600000000000023px;box-sizing:border-box;border:1px solid #EAEAEA;border-radius:2.5px;background:#fff"></div>
<div style="position:absolute;left:620.6px;width:53.0px;text-align:center;top:321.45px;line-height:10.40px;font-size:8px;color:#ABABAB;white-space:nowrap;">最小值</div>
<div style="position:absolute;left:686.0px;top:317px;width:53.0px;height:17.600000000000023px;box-sizing:border-box;border:1px solid #EAEAEA;border-radius:2.5px;background:#fff"></div>
<div style="position:absolute;left:686.0px;width:53.0px;text-align:center;top:321.45px;line-height:10.40px;font-size:8px;color:#ABABAB;white-space:nowrap;">最大值</div>
<svg style="position:absolute;left:677.3000000000001px;top:324.25px" width="5" height="4" viewBox="0 0 5 4"><path d="M0.4,2.5 Q1.3,1.2 2.5,2 Q3.7,2.8 4.6,1.5" fill="none" stroke="#AAA" stroke-width="0.7"/></svg>
<div style="position:absolute;right:364.6px;top:351.70px;line-height:10.40px;font-size:8px;color:#6F6F6F;white-space:nowrap;letter-spacing:-0.22px">评分数</div>
<svg style="position:absolute;left:389px;top:351.09999999999997px" width="9" height="9" viewBox="0 0 9 9"><circle cx="4.5" cy="4.5" r="3.6" fill="none" stroke="#F1A888" stroke-width="0.85"/><path d="M3.4,3.6 Q3.4,2.5 4.5,2.5 Q5.6,2.5 5.6,3.5 Q5.6,4.2 4.5,4.6 V5.3" fill="none" stroke="#F1A888" stroke-width="0.7"/><circle cx="4.5" cy="6.5" r="0.42" fill="#F1A888"/></svg>
<div style="position:absolute;right:149.39999999999998px;top:351.70px;line-height:10.40px;font-size:8px;color:#6F6F6F;white-space:nowrap;letter-spacing:-0.22px">月新增评分数</div>
<svg style="position:absolute;left:603.8px;top:351.09999999999997px" width="9" height="9" viewBox="0 0 9 9"><circle cx="4.5" cy="4.5" r="3.6" fill="none" stroke="#F1A888" stroke-width="0.85"/><path d="M3.4,3.6 Q3.4,2.5 4.5,2.5 Q5.6,2.5 5.6,3.5 Q5.6,4.2 4.5,4.6 V5.3" fill="none" stroke="#F1A888" stroke-width="0.7"/><circle cx="4.5" cy="6.5" r="0.42" fill="#F1A888"/></svg>
<div style="position:absolute;left:405.2px;top:347px;width:53.0px;height:17.600000000000023px;box-sizing:border-box;border:1px solid #EAEAEA;border-radius:2.5px;background:#fff"></div>
<div style="position:absolute;left:405.2px;width:53.0px;text-align:center;top:351.70px;line-height:10.40px;font-size:8px;color:#ABABAB;white-space:nowrap;">最小值</div>
<div style="position:absolute;left:470.7px;top:347px;width:53.00000000000006px;height:17.600000000000023px;box-sizing:border-box;border:1px solid #EAEAEA;border-radius:2.5px;background:#fff"></div>
<div style="position:absolute;left:470.7px;width:53.00000000000006px;text-align:center;top:351.70px;line-height:10.40px;font-size:8px;color:#ABABAB;white-space:nowrap;">最大值</div>
<svg style="position:absolute;left:461.95px;top:354.5px" width="5" height="4" viewBox="0 0 5 4"><path d="M0.4,2.5 Q1.3,1.2 2.5,2 Q3.7,2.8 4.6,1.5" fill="none" stroke="#AAA" stroke-width="0.7"/></svg>
<div style="position:absolute;left:620.6px;top:347px;width:53.0px;height:17.600000000000023px;box-sizing:border-box;border:1px solid #EAEAEA;border-radius:2.5px;background:#fff"></div>
<div style="position:absolute;left:620.6px;width:53.0px;text-align:center;top:351.70px;line-height:10.40px;font-size:8px;color:#ABABAB;white-space:nowrap;">最小值</div>
<div style="position:absolute;left:686.0px;top:347px;width:53.0px;height:17.600000000000023px;box-sizing:border-box;border:1px solid #EAEAEA;border-radius:2.5px;background:#fff"></div>
<div style="position:absolute;left:686.0px;width:53.0px;text-align:center;top:351.70px;line-height:10.40px;font-size:8px;color:#ABABAB;white-space:nowrap;">最大值</div>
<svg style="position:absolute;left:677.3000000000001px;top:354.5px" width="5" height="4" viewBox="0 0 5 4"><path d="M0.4,2.5 Q1.3,1.2 2.5,2 Q3.7,2.8 4.6,1.5" fill="none" stroke="#AAA" stroke-width="0.7"/></svg>
<div style="position:absolute;right:364.6px;top:381.95px;line-height:10.40px;font-size:8px;color:#6F6F6F;white-space:nowrap;letter-spacing:-0.22px">评分值</div>
<svg style="position:absolute;left:389px;top:381.34999999999997px" width="9" height="9" viewBox="0 0 9 9"><circle cx="4.5" cy="4.5" r="3.6" fill="none" stroke="#F1A888" stroke-width="0.85"/><path d="M3.4,3.6 Q3.4,2.5 4.5,2.5 Q5.6,2.5 5.6,3.5 Q5.6,4.2 4.5,4.6 V5.3" fill="none" stroke="#F1A888" stroke-width="0.7"/><circle cx="4.5" cy="6.5" r="0.42" fill="#F1A888"/></svg>
<div style="position:absolute;right:149.39999999999998px;top:381.95px;line-height:10.40px;font-size:8px;color:#6F6F6F;white-space:nowrap;letter-spacing:-0.22px">卖家数量</div>
<svg style="position:absolute;left:603.8px;top:381.34999999999997px" width="9" height="9" viewBox="0 0 9 9"><circle cx="4.5" cy="4.5" r="3.6" fill="none" stroke="#F1A888" stroke-width="0.85"/><path d="M3.4,3.6 Q3.4,2.5 4.5,2.5 Q5.6,2.5 5.6,3.5 Q5.6,4.2 4.5,4.6 V5.3" fill="none" stroke="#F1A888" stroke-width="0.7"/><circle cx="4.5" cy="6.5" r="0.42" fill="#F1A888"/></svg>
<div style="position:absolute;left:405.2px;top:378px;width:53.0px;height:17.600000000000023px;box-sizing:border-box;border:1px solid #EAEAEA;border-radius:2.5px;background:#fff"></div>
<div style="position:absolute;left:405.2px;width:53.0px;text-align:center;top:381.95px;line-height:10.40px;font-size:8px;color:#ABABAB;white-space:nowrap;">最小值</div>
<div style="position:absolute;left:470.7px;top:378px;width:53.00000000000006px;height:17.600000000000023px;box-sizing:border-box;border:1px solid #EAEAEA;border-radius:2.5px;background:#fff"></div>
<div style="position:absolute;left:470.7px;width:53.00000000000006px;text-align:center;top:381.95px;line-height:10.40px;font-size:8px;color:#ABABAB;white-space:nowrap;">最大值</div>
<svg style="position:absolute;left:461.95px;top:384.75px" width="5" height="4" viewBox="0 0 5 4"><path d="M0.4,2.5 Q1.3,1.2 2.5,2 Q3.7,2.8 4.6,1.5" fill="none" stroke="#AAA" stroke-width="0.7"/></svg>
<div style="position:absolute;left:620.6px;top:378px;width:53.0px;height:17.600000000000023px;box-sizing:border-box;border:1px solid #EAEAEA;border-radius:2.5px;background:#fff"></div>
<div style="position:absolute;left:620.6px;width:53.0px;text-align:center;top:381.95px;line-height:10.40px;font-size:8px;color:#ABABAB;white-space:nowrap;">最小值</div>
<div style="position:absolute;left:686.0px;top:378px;width:53.0px;height:17.600000000000023px;box-sizing:border-box;border:1px solid #EAEAEA;border-radius:2.5px;background:#fff"></div>
<div style="position:absolute;left:686.0px;width:53.0px;text-align:center;top:381.95px;line-height:10.40px;font-size:8px;color:#ABABAB;white-space:nowrap;">最大值</div>
<svg style="position:absolute;left:677.3000000000001px;top:384.75px" width="5" height="4" viewBox="0 0 5 4"><path d="M0.4,2.5 Q1.3,1.2 2.5,2 Q3.7,2.8 4.6,1.5" fill="none" stroke="#AAA" stroke-width="0.7"/></svg>
<div style="position:absolute;right:364.6px;top:412.50px;line-height:10.40px;font-size:8px;color:#6F6F6F;white-space:nowrap;letter-spacing:-0.22px"><span style="font-size:7.3px;letter-spacing:0.3px">LQS</span></div>
<svg style="position:absolute;left:389px;top:411.9px" width="9" height="9" viewBox="0 0 9 9"><circle cx="4.5" cy="4.5" r="3.6" fill="none" stroke="#F1A888" stroke-width="0.85"/><path d="M3.4,3.6 Q3.4,2.5 4.5,2.5 Q5.6,2.5 5.6,3.5 Q5.6,4.2 4.5,4.6 V5.3" fill="none" stroke="#F1A888" stroke-width="0.7"/><circle cx="4.5" cy="6.5" r="0.42" fill="#F1A888"/></svg>
<div style="position:absolute;right:149.39999999999998px;top:412.50px;line-height:10.40px;font-size:8px;color:#6F6F6F;white-space:nowrap;letter-spacing:-0.22px"><span style="font-size:7.3px;letter-spacing:0.3px">FBA</span>运费</div>
<svg style="position:absolute;left:603.8px;top:411.9px" width="9" height="9" viewBox="0 0 9 9"><circle cx="4.5" cy="4.5" r="3.6" fill="none" stroke="#F1A888" stroke-width="0.85"/><path d="M3.4,3.6 Q3.4,2.5 4.5,2.5 Q5.6,2.5 5.6,3.5 Q5.6,4.2 4.5,4.6 V5.3" fill="none" stroke="#F1A888" stroke-width="0.7"/><circle cx="4.5" cy="6.5" r="0.42" fill="#F1A888"/></svg>
<div style="position:absolute;left:405.2px;top:408px;width:53.0px;height:17.600000000000023px;box-sizing:border-box;border:1px solid #EAEAEA;border-radius:2.5px;background:#fff"></div>
<div style="position:absolute;left:405.2px;width:53.0px;text-align:center;top:412.50px;line-height:10.40px;font-size:8px;color:#ABABAB;white-space:nowrap;">最小值</div>
<div style="position:absolute;left:470.7px;top:408px;width:53.00000000000006px;height:17.600000000000023px;box-sizing:border-box;border:1px solid #EAEAEA;border-radius:2.5px;background:#fff"></div>
<div style="position:absolute;left:470.7px;width:53.00000000000006px;text-align:center;top:412.50px;line-height:10.40px;font-size:8px;color:#ABABAB;white-space:nowrap;">最大值</div>
<svg style="position:absolute;left:461.95px;top:415.3px" width="5" height="4" viewBox="0 0 5 4"><path d="M0.4,2.5 Q1.3,1.2 2.5,2 Q3.7,2.8 4.6,1.5" fill="none" stroke="#AAA" stroke-width="0.7"/></svg>
<div style="position:absolute;left:620.6px;top:408px;width:53.0px;height:17.600000000000023px;box-sizing:border-box;border:1px solid #EAEAEA;border-radius:2.5px;background:#fff"></div>
<div style="position:absolute;left:620.6px;width:53.0px;text-align:center;top:412.50px;line-height:10.40px;font-size:8px;color:#ABABAB;white-space:nowrap;">最小值</div>
<div style="position:absolute;left:686.0px;top:408px;width:53.0px;height:17.600000000000023px;box-sizing:border-box;border:1px solid #EAEAEA;border-radius:2.5px;background:#fff"></div>
<div style="position:absolute;left:686.0px;width:53.0px;text-align:center;top:412.50px;line-height:10.40px;font-size:8px;color:#ABABAB;white-space:nowrap;">最大值</div>
<svg style="position:absolute;left:677.3000000000001px;top:415.3px" width="5" height="4" viewBox="0 0 5 4"><path d="M0.4,2.5 Q1.3,1.2 2.5,2 Q3.7,2.8 4.6,1.5" fill="none" stroke="#AAA" stroke-width="0.7"/></svg>
<div style="position:absolute;right:364.6px;top:443.45px;line-height:10.40px;font-size:8px;color:#6F6F6F;white-space:nowrap;letter-spacing:-0.22px">重量</div>
<svg style="position:absolute;left:389px;top:442.84999999999997px" width="9" height="9" viewBox="0 0 9 9"><circle cx="4.5" cy="4.5" r="3.6" fill="none" stroke="#F1A888" stroke-width="0.85"/><path d="M3.4,3.6 Q3.4,2.5 4.5,2.5 Q5.6,2.5 5.6,3.5 Q5.6,4.2 4.5,4.6 V5.3" fill="none" stroke="#F1A888" stroke-width="0.7"/><circle cx="4.5" cy="6.5" r="0.42" fill="#F1A888"/></svg>
<div style="position:absolute;right:149.39999999999998px;top:443.45px;line-height:10.40px;font-size:8px;color:#6F6F6F;white-space:nowrap;letter-spacing:-0.22px">产品尺寸</div>
<svg style="position:absolute;left:603.8px;top:442.84999999999997px" width="9" height="9" viewBox="0 0 9 9"><circle cx="4.5" cy="4.5" r="3.6" fill="none" stroke="#F1A888" stroke-width="0.85"/><path d="M3.4,3.6 Q3.4,2.5 4.5,2.5 Q5.6,2.5 5.6,3.5 Q5.6,4.2 4.5,4.6 V5.3" fill="none" stroke="#F1A888" stroke-width="0.7"/><circle cx="4.5" cy="6.5" r="0.42" fill="#F1A888"/></svg>
<div style="position:absolute;left:405.2px;top:439px;width:53.0px;height:17.600000000000023px;box-sizing:border-box;border:1px solid #EAEAEA;border-radius:2.5px;background:#fff"></div>
<div style="position:absolute;left:445.2px;top:439px;width:13.0px;height:17.600000000000023px;box-sizing:border-box;border:1px solid #EAEAEA;border-radius:0 2.5px 2.5px 0;background:#F5F6F8"></div>
<div style="position:absolute;left:445.2px;width:13.0px;text-align:center;top:441.65px;line-height:13.00px;font-size:10px;color:#A6A6A6;white-space:nowrap;font-family:'Liberation Serif',serif">g</div>
<div style="position:absolute;left:405.2px;width:40.0px;text-align:center;top:443.45px;line-height:10.40px;font-size:8px;color:#ABABAB;white-space:nowrap;">最小值</div>
<div style="position:absolute;left:470.7px;top:439px;width:53.00000000000006px;height:17.600000000000023px;box-sizing:border-box;border:1px solid #EAEAEA;border-radius:2.5px;background:#fff"></div>
<div style="position:absolute;left:510.70000000000005px;top:439px;width:13.0px;height:17.600000000000023px;box-sizing:border-box;border:1px solid #EAEAEA;border-radius:0 2.5px 2.5px 0;background:#F5F6F8"></div>
<div style="position:absolute;left:510.70000000000005px;width:13.0px;text-align:center;top:441.65px;line-height:13.00px;font-size:10px;color:#A6A6A6;white-space:nowrap;font-family:'Liberation Serif',serif">g</div>
<div style="position:absolute;left:470.7px;width:40.00000000000006px;text-align:center;top:443.45px;line-height:10.40px;font-size:8px;color:#ABABAB;white-space:nowrap;">最大值</div>
<svg style="position:absolute;left:461.95px;top:446.25px" width="5" height="4" viewBox="0 0 5 4"><path d="M0.4,2.5 Q1.3,1.2 2.5,2 Q3.7,2.8 4.6,1.5" fill="none" stroke="#AAA" stroke-width="0.7"/></svg>
<div style="position:absolute;left:620.7px;top:438.75px;width:118.5px;height:18.19999999999999px;box-sizing:border-box;border:1px solid #E6E6E6;border-radius:2.5px;background:#fff"></div>
<div style="position:absolute;left:625.4px;top:443.45px;line-height:10.40px;font-size:8px;color:#A0A0A0;white-space:nowrap;">请选择产品尺寸</div>
<svg style="position:absolute;left:730.8px;top:445.75px" width="7" height="5" viewBox="0 0 7 5"><path d="M0.9,1 L3.3,3.4 L5.7,1" fill="none" stroke="#555" stroke-width="1"/></svg>
<div style="position:absolute;right:364.6px;top:473.80px;line-height:10.40px;font-size:8px;color:#6F6F6F;white-space:nowrap;letter-spacing:-0.22px">配送方式</div>
<svg style="position:absolute;left:389px;top:473.2px" width="9" height="9" viewBox="0 0 9 9"><circle cx="4.5" cy="4.5" r="3.6" fill="none" stroke="#F1A888" stroke-width="0.85"/><path d="M3.4,3.6 Q3.4,2.5 4.5,2.5 Q5.6,2.5 5.6,3.5 Q5.6,4.2 4.5,4.6 V5.3" fill="none" stroke="#F1A888" stroke-width="0.7"/><circle cx="4.5" cy="6.5" r="0.42" fill="#F1A888"/></svg>
<div style="position:absolute;right:149.39999999999998px;top:473.80px;line-height:10.40px;font-size:8px;color:#6F6F6F;white-space:nowrap;letter-spacing:-0.22px">卖家所属地</div>
<svg style="position:absolute;left:603.8px;top:473.2px" width="9" height="9" viewBox="0 0 9 9"><circle cx="4.5" cy="4.5" r="3.6" fill="none" stroke="#F1A888" stroke-width="0.85"/><path d="M3.4,3.6 Q3.4,2.5 4.5,2.5 Q5.6,2.5 5.6,3.5 Q5.6,4.2 4.5,4.6 V5.3" fill="none" stroke="#F1A888" stroke-width="0.7"/><circle cx="4.5" cy="6.5" r="0.42" fill="#F1A888"/></svg>
<div style="position:absolute;left:621.2px;top:469.1px;width:118.5px;height:18.19999999999999px;box-sizing:border-box;border:1px solid #E6E6E6;border-radius:2.5px;background:#fff"></div>
<div style="position:absolute;left:629px;top:473.80px;line-height:10.40px;font-size:8px;color:#555;white-space:nowrap;">不限国家</div>
<svg style="position:absolute;left:730.8px;top:476.1px" width="7" height="5" viewBox="0 0 7 5"><path d="M0.9,1 L3.3,3.4 L5.7,1" fill="none" stroke="#555" stroke-width="1"/></svg>
<div style="position:absolute;right:364.6px;top:504.05px;line-height:10.40px;font-size:8px;color:#6F6F6F;white-space:nowrap;letter-spacing:-0.22px">热销标识</div>
<svg style="position:absolute;left:389px;top:503.45px" width="9" height="9" viewBox="0 0 9 9"><circle cx="4.5" cy="4.5" r="3.6" fill="none" stroke="#F1A888" stroke-width="0.85"/><path d="M3.4,3.6 Q3.4,2.5 4.5,2.5 Q5.6,2.5 5.6,3.5 Q5.6,4.2 4.5,4.6 V5.3" fill="none" stroke="#F1A888" stroke-width="0.7"/><circle cx="4.5" cy="6.5" r="0.42" fill="#F1A888"/></svg>
<div style="position:absolute;right:149.39999999999998px;top:504.05px;line-height:10.40px;font-size:8px;color:#6F6F6F;white-space:nowrap;letter-spacing:-0.22px">上架日期</div>
<svg style="position:absolute;left:603.8px;top:503.45px" width="9" height="9" viewBox="0 0 9 9"><circle cx="4.5" cy="4.5" r="3.6" fill="none" stroke="#F1A888" stroke-width="0.85"/><path d="M3.4,3.6 Q3.4,2.5 4.5,2.5 Q5.6,2.5 5.6,3.5 Q5.6,4.2 4.5,4.6 V5.3" fill="none" stroke="#F1A888" stroke-width="0.7"/><circle cx="4.5" cy="6.5" r="0.42" fill="#F1A888"/></svg>
<div style="position:absolute;left:621.2px;top:499.35px;width:118.5px;height:18.200000000000045px;box-sizing:border-box;border:1px solid #E6E6E6;border-radius:2.5px;background:#fff"></div>
<div style="position:absolute;left:629px;top:504.05px;line-height:10.40px;font-size:8px;color:#555;white-space:nowrap;">不限</div>
<svg style="position:absolute;left:730.8px;top:506.35px" width="7" height="5" viewBox="0 0 7 5"><path d="M0.9,1 L3.3,3.4 L5.7,1" fill="none" stroke="#555" stroke-width="1"/></svg>
<svg style="position:absolute;left:407.2px;top:473.2px" width="9" height="9" viewBox="0 0 9 9"><circle cx="4.5" cy="4.5" r="3.5" fill="none" stroke="#F78A26" stroke-width="1.7"/><circle cx="4.5" cy="4.5" r="1.4" fill="#F78A26"/></svg>
<div style="position:absolute;left:417.2px;top:473.20px;line-height:10.40px;font-size:8px;color:#F78A26;white-space:nowrap;">不限</div>
<svg style="position:absolute;left:438.2px;top:473.2px" width="9" height="9" viewBox="0 0 9 9"><circle cx="4.5" cy="4.5" r="3.9" fill="#fff" stroke="#DADADA" stroke-width="0.8"/></svg>
<div style="position:absolute;left:448.8px;top:473.32px;line-height:9.36px;font-size:7.2px;color:#6E6E6E;white-space:nowrap;letter-spacing:0.35px">AMZ</div>
<svg style="position:absolute;left:469.8px;top:473.2px" width="9" height="9" viewBox="0 0 9 9"><circle cx="4.5" cy="4.5" r="3.9" fill="#fff" stroke="#DADADA" stroke-width="0.8"/></svg>
<div style="position:absolute;left:480px;top:473.32px;line-height:9.36px;font-size:7.2px;color:#6E6E6E;white-space:nowrap;letter-spacing:0.35px">FBA</div>
<svg style="position:absolute;left:499.6px;top:473.2px" width="9" height="9" viewBox="0 0 9 9"><circle cx="4.5" cy="4.5" r="3.9" fill="#fff" stroke="#DADADA" stroke-width="0.8"/></svg>
<div style="position:absolute;left:510.3px;top:473.32px;line-height:9.36px;font-size:7.2px;color:#6E6E6E;white-space:nowrap;letter-spacing:0.35px">FBM</div>
<div style="position:absolute;left:405px;top:503.2px;width:8.199999999999989px;height:8.199999999999989px;box-sizing:border-box;border:1px solid #DFDFE3;border-radius:2px;background:#fff"></div>
<div style="position:absolute;left:418px;top:502.86px;line-height:9.49px;font-size:7.3px;color:#6E6E6E;white-space:nowrap;letter-spacing:0.3px">Best Seller</div>
<div style="position:absolute;left:459.1px;top:503.2px;width:8.199999999999989px;height:8.199999999999989px;box-sizing:border-box;border:1px solid #DFDFE3;border-radius:2px;background:#fff"></div>
<div style="position:absolute;left:472.2px;top:502.92px;line-height:9.36px;font-size:7.2px;color:#6E6E6E;white-space:nowrap;letter-spacing:0.28px">Amazon's Choice</div>
<div style="position:absolute;left:405px;top:515.3px;width:8.199999999999989px;height:8.200000000000045px;box-sizing:border-box;border:1px solid #DFDFE3;border-radius:2px;background:#fff"></div>
<div style="position:absolute;left:418px;top:515.05px;line-height:9.49px;font-size:7.3px;color:#6E6E6E;white-space:nowrap;letter-spacing:0.12px">New Release</div>
<svg style="position:absolute;left:605px;top:47px" width="12" height="15" viewBox="0 0 12 15">
<path d="M2,1.5 L2,11.5 L4.4,9.6 L6,12.8 L7.4,12.1 L5.9,9 L9.2,9 Z" fill="#fff" stroke="#222" stroke-width="0.9" stroke-linejoin="round"/>
</svg>
</div></body></html>
